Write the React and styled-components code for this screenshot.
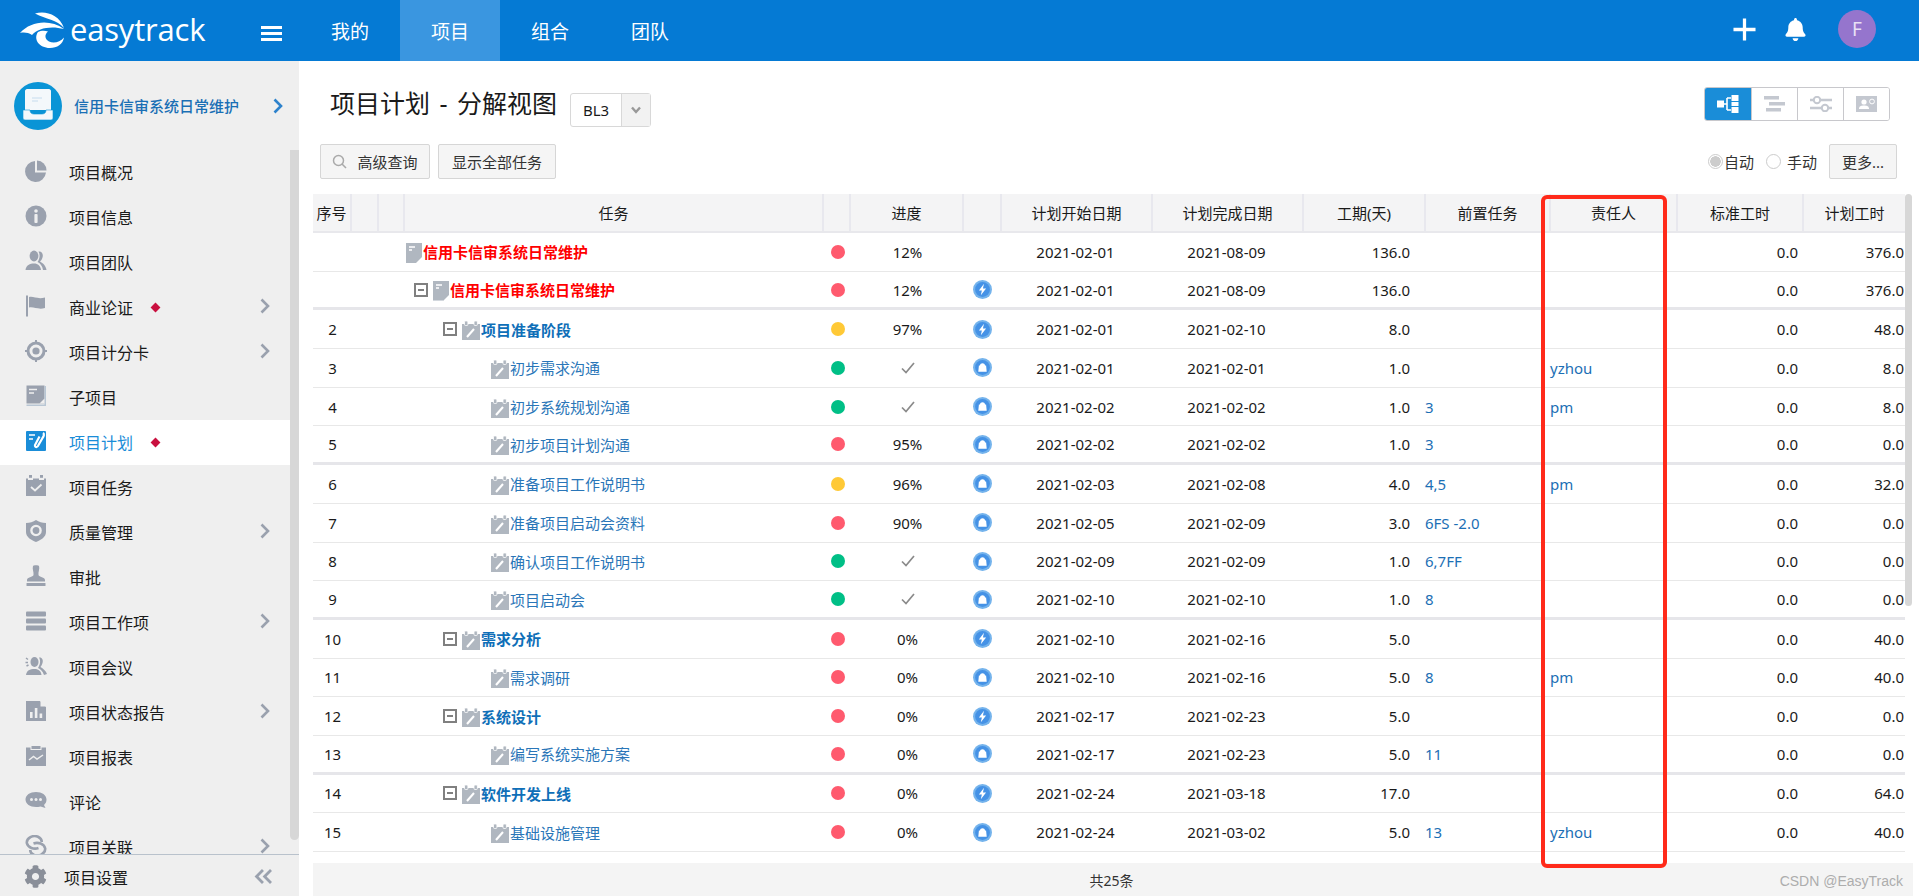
import React from "react"
import styled, { createGlobalStyle } from "styled-components"
import { FaBell, FaCog } from "react-icons/fa"

const GlobalStyle = createGlobalStyle`
    html, body {
        margin: 0;
        padding: 0;
        background: #fff;
        font-family: "Noto Sans", "Noto Sans CJK SC", sans-serif;
        color: #1a1a1a;
    }
    * {
        box-sizing: border-box;
    }
`

const GRAY = "#9aa1ae"
const COLUMNS = "39px 27px 26px 419px 27px 113px 38px 151px 151px 122px 125px 127px 126px 101px"

/* sidebar icons, all in a 22 x 22 box */
const Pie = () => (
    <Glyph viewBox="0 0 22 22">
        <path fill={GRAY} d="M10 1 A10.5 10.5 0 1 0 21 12.5 H10 Z" />
        <path fill={GRAY} d="M12 0.5 A10 10 0 0 1 21.5 10.5 H12 Z" />
    </Glyph>
)
const Info = () => (
    <Glyph viewBox="0 0 22 22">
        <circle cx="11" cy="11" r="10.5" fill={GRAY} />
        <circle cx="11" cy="6" r="1.8" fill="#efefef" />
        <rect x="9.4" y="9" width="3.2" height="9" rx="1" fill="#efefef" />
    </Glyph>
)
const Team = () => (
    <Glyph viewBox="0 0 22 22">
        <ellipse cx="9" cy="6" rx="4.4" ry="5.4" fill={GRAY} />
        <path fill={GRAY} d="M0.5 20 C1 15 5 13.5 9 13.5 C13 13.5 15.5 16 16 20 Z" />
        <path fill={GRAY} d="M13.5 1.5 C17 1 18.5 4 17.5 7.5 C17 9.5 16 10.5 15 11.5 C18 13 21 16 21.5 20 H18 C17.5 16 15 13 12.5 12 C14.5 9 15.5 5 13.5 1.5 Z" />
    </Glyph>
)
const Flag = () => (
    <Glyph viewBox="0 0 22 22">
        <rect x="1" y="0.5" width="2" height="21" fill={GRAY} />
        <path fill={GRAY} d="M4 2 C9 1 12 4.5 20 2.5 V13 C13 15 9 11.5 4 12.5 Z" />
    </Glyph>
)
const Target = () => (
    <Glyph viewBox="0 0 22 22">
        <circle cx="11" cy="11" r="8" fill="none" stroke={GRAY} strokeWidth="3" />
        <circle cx="11" cy="11" r="3.6" fill={GRAY} />
        <path stroke={GRAY} strokeWidth="2" d="M11 0 V3 M11 19 V22 M0 11 H3 M19 11 H22" />
    </Glyph>
)
const Book = () => (
    <Glyph viewBox="0 0 22 22">
        <rect x="1.5" y="0.5" width="18" height="18" fill={GRAY} />
        <path fill="#b8c6d4" d="M1.5 19.5 H19.5 V1 H21 V21 H1.5 Z" />
        <path stroke="#efefef" strokeWidth="1.6" d="M4 4.5 H12 M4 8 H9" />
        <path fill="#efefef" d="M14.5 18.5 L19.5 13.5 V18.5 Z" />
    </Glyph>
)
const PlanBlue = () => (
    <Glyph viewBox="0 0 22 22">
        <rect x="1" y="1" width="20" height="20" rx="1" fill="#1a8dd8" />
        <path stroke="#fff" strokeWidth="1.6" d="M4 5 H10 M4 9 H8" />
        <path stroke="#fff" strokeWidth="2.2" fill="none" d="M18 3 C19.5 4 19 6 17.5 8 L13.5 15 C12.5 18 9.5 17.5 10 15 L14.5 6.5" />
    </Glyph>
)
const TaskCal = () => (
    <Glyph viewBox="0 0 22 22">
        <path fill={GRAY} d="M1 3.5 H21 V21 H1 Z" />
        <path fill="#efefef" d="M3 0 H8 V5.5 H3 Z M14 0 H19 V5.5 H14 Z" transform="translate(0 -0.4)" />
        <rect x="4" y="0" width="3" height="2.8" fill={GRAY} />
        <rect x="15" y="0" width="3" height="2.8" fill={GRAY} />
        <path stroke="#efefef" strokeWidth="1.8" fill="none" d="M6 12 L10 15.5 L16.5 9.5" />
    </Glyph>
)
const Shield = () => (
    <Glyph viewBox="0 0 22 22">
        <path fill={GRAY} d="M1 3 C5 3 8 2 11 0 C14 2 17 3 21 3 V12 C21 17 16 20 11 22 C6 20 1 17 1 12 Z" />
        <circle cx="11" cy="10.5" r="4.6" fill="none" stroke="#efefef" strokeWidth="2.4" />
    </Glyph>
)
const Stamp = () => (
    <Glyph viewBox="0 0 22 22">
        <path fill={GRAY} d="M8 1 C8 0 14 0 14 1 C15 4 13 7 13.5 10 C14 12 20 12 20 15 V16.5 H2 V15 C2 12 8 12 8.5 10 C9 7 7 4 8 1 Z" />
        <rect x="1.5" y="18" width="19" height="3" rx="0.5" fill={GRAY} />
    </Glyph>
)
const Stack = () => (
    <Glyph viewBox="0 0 22 22">
        <rect x="1" y="1.5" width="20" height="5" rx="1" fill={GRAY} />
        <rect x="1" y="8.5" width="20" height="5" rx="1" fill={GRAY} />
        <rect x="1" y="15.5" width="20" height="5" rx="1" fill={GRAY} />
    </Glyph>
)
const Meeting = () => (
    <Glyph viewBox="0 0 22 22">
        <ellipse cx="9.5" cy="7" rx="4" ry="5" fill={GRAY} />
        <path fill={GRAY} d="M1 20 C1.5 15.5 5 14 9.5 14 C14 14 16 16.5 16.5 20 Z" />
        <path fill={GRAY} d="M14 2.5 C17 2 18.5 5 17.5 8 C17 10 16 11 15.5 12 C18 13.5 21 16 22 19 L19 20 C17.5 16 15.5 14 13 13 C15 10 16 6 14 2.5 Z" />
        <path stroke={GRAY} strokeWidth="1.4" d="M1 3 L3 4.5 M0.5 7.5 H3 M1.5 11 L3.5 10" />
    </Glyph>
)
const Report = () => (
    <Glyph viewBox="0 0 22 22">
        <path fill={GRAY} d="M1 1 H15 L21 7 V21 H1 Z" />
        <path fill="#efefef" d="M15.5 0.5 H16.5 L21.5 5.5 V6.5 H15.5 Z" />
        <path fill="#efefef" d="M5 12 H7.6 V18 H5 Z M9.8 8 H12.4 V18 H9.8 Z M14.6 13.5 H17.2 V18 H14.6 Z" />
    </Glyph>
)
const Chart = () => (
    <Glyph viewBox="0 0 22 22">
        <rect x="1" y="2.5" width="20" height="18.5" fill={GRAY} />
        <rect x="6" y="0.5" width="10" height="4" fill={GRAY} stroke="#efefef" strokeWidth="1" />
        <path stroke="#efefef" strokeWidth="1.5" fill="none" d="M4 15 L8.5 11.5 L12 14 L18 10" />
    </Glyph>
)
const Comment = () => (
    <Glyph viewBox="0 0 22 22">
        <path fill={GRAY} d="M11 2 C17 2 21.5 5 21.5 9.5 C21.5 12 20.5 13.5 19 15 L20.5 18 L15.5 16.5 C14 17 12.5 17 11 17 C5 17 0.5 14 0.5 9.5 C0.5 5 5 2 11 2 Z" />
        <circle cx="6.5" cy="9.5" r="1.5" fill="#efefef" />
        <circle cx="11" cy="9.5" r="1.5" fill="#efefef" />
        <circle cx="15.5" cy="9.5" r="1.5" fill="#efefef" />
    </Glyph>
)
const LinkRings = () => (
    <Glyph viewBox="0 0 22 22">
        <path fill="none" stroke={GRAY} strokeWidth="2.6" d="M13.5 13 C9 14.5 3 13 1.8 8 C1.5 3 8 -0.5 13 1.8 C15.5 3 16.8 5 16.8 7" />
        <path fill="none" stroke={GRAY} strokeWidth="2.6" d="M8.5 8.5 C13 7 19 8.5 20.2 13.5 C20.5 18.5 14 22 9 20 C6.5 19 5.2 17 5.2 15" />
    </Glyph>
)

const Chevron = ({ color = GRAY }) => (
    <ChevronSvg viewBox="0 0 10 16">
        <path fill="none" stroke={color} strokeWidth="2.6" d="M1.5 1.5 L8 8 L1.5 14.5" />
    </ChevronSvg>
)

const Logo = () => (
    <LogoSvg viewBox="16 10 48 40">
        <path fill="#fff" d="M33 12.5 C43 9.5 57 13 62 27 C55 18.5 44 18.5 33 12.5 Z" />
        <path fill="#fff" d="M18 32 C29 20 48 18 62 28 C49 24.5 36 27 30 34 C26 31.5 22 31 18 32 Z" />
        <path fill="#fff" d="M36 31 C31 38 37 47 48 47 C55 47 61 43 62 36.5 C58 41 52 43 47 40.5 C43 38 42 34 46 30.5 C43 29.5 39 29.5 36 31 Z" />
    </LogoSvg>
)

const ProjectBadge = () => (
    <BadgeSvg viewBox="0 0 48 48">
        <circle cx="24" cy="24" r="24" fill="#0a94d6" />
        <path fill="#f4f8fb" d="M11 9 C11 8 12 7 13 7 H35 C36 7 37 8 37 9 V28 H11 Z" />
        <path stroke="#c6dcee" strokeWidth="1" d="M18 16 H28 M18 19 H24" />
        <path fill="#f4f8fb" stroke="#0a94d6" strokeWidth="0.6" d="M9 28 H16 C16 31 18 32 20 32 H28 C30 32 32 31 32 28 H39 V36 C39 37 38 38 37 38 H11 C10 38 9 37 9 36 Z" />
    </BadgeSvg>
)

const DocIcon = ({ $small }) => (
    <TaskIconSvg viewBox="0 0 16 20" $w={16} $h={20}>
        <path fill="#b0b7c0" d="M0 0 H16 V14 L10 20 H0 Z" />
        {$small && <path fill="#d3d8de" d="M0 19 H10 V20 H0 Z" />}
        <path stroke="#fff" strokeWidth="1.3" d="M3 4 H9 M3 7 H6" />
        <path fill="#fff" d="M11 20 L16 15 V20 Z" />
    </TaskIconSvg>
)

const PlanIcon = () => (
    <TaskIconSvg viewBox="0 0 18 19" $w={18} $h={19}>
        <path fill="#b0b7c0" d="M0 3 H18 V19 H0 Z" />
        <rect x="2.5" y="0" width="3.4" height="4.5" rx="1" fill="#b0b7c0" stroke="#fff" strokeWidth="0.8" />
        <rect x="12" y="0" width="3.4" height="4.5" rx="1" fill="#b0b7c0" stroke="#fff" strokeWidth="0.8" />
        <path stroke="#fff" strokeWidth="2" d="M5 16 L12 8" />
    </TaskIconSvg>
)

const TypeIcon = ({ kind }) => (
    <TypeSvg viewBox="0 0 18 18">
        <circle cx="9" cy="9" r="9" fill="#74b3ec" />
        <circle cx="9" cy="9" r="7" fill="#4592e6" />
        {kind === "bolt"
            ? <path fill="#fff" d="M10.4 3.6 L5.6 10 H8.4 L7.4 14.4 L12.4 8 H9.4 Z" />
            : <path fill="#fff" d="M5.6 7 H6.6 C6.8 4.2 11.2 4.2 11.4 7 H12.4 L13 13 H5 Z" />}
    </TypeSvg>
)

const NAV_ITEMS = [
    { label: "项目概况", Icon: Pie },
    { label: "项目信息", Icon: Info },
    { label: "项目团队", Icon: Team },
    { label: "商业论证", Icon: Flag, mark: true, more: true },
    { label: "项目计分卡", Icon: Target, more: true },
    { label: "子项目", Icon: Book },
    { label: "项目计划", Icon: PlanBlue, mark: true, active: true },
    { label: "项目任务", Icon: TaskCal },
    { label: "质量管理", Icon: Shield, more: true },
    { label: "审批", Icon: Stamp },
    { label: "项目工作项", Icon: Stack, more: true },
    { label: "项目会议", Icon: Meeting },
    { label: "项目状态报告", Icon: Report, more: true },
    { label: "项目报表", Icon: Chart },
    { label: "评论", Icon: Comment },
    { label: "项目关联", Icon: LinkRings, more: true },
]

const HEAD = ["序号", "", "", "任务", "", "进度", "", "计划开始日期", "计划完成日期", "工期(天)", "前置任务", "责任人", "标准工时", "计划工时"]

const STATUS = { red: "#ff5a6e", yellow: "#ffc936", green: "#00bf86" }

const ROWS = [
    { no: "", name: "信用卡信审系统日常维护", level: 0, status: "red", pct: "12%", start: "2021-02-01", end: "2021-08-09", days: "136.0", work: "376.0" },
    { no: "", name: "信用卡信审系统日常维护", level: 1, status: "red", pct: "12%", type: "bolt", start: "2021-02-01", end: "2021-08-09", days: "136.0", work: "376.0" },
    { no: "2", name: "项目准备阶段", level: 2, status: "yellow", pct: "97%", type: "bolt", start: "2021-02-01", end: "2021-02-10", days: "8.0", work: "48.0" },
    { no: "3", name: "初步需求沟通", level: 3, status: "green", type: "lock", start: "2021-02-01", end: "2021-02-01", days: "1.0", owner: "yzhou", work: "8.0" },
    { no: "4", name: "初步系统规划沟通", level: 3, status: "green", type: "lock", start: "2021-02-02", end: "2021-02-02", days: "1.0", pre: "3", owner: "pm", work: "8.0" },
    { no: "5", name: "初步项目计划沟通", level: 3, status: "red", pct: "95%", type: "lock", start: "2021-02-02", end: "2021-02-02", days: "1.0", pre: "3", work: "0.0" },
    { no: "6", name: "准备项目工作说明书", level: 3, status: "yellow", pct: "96%", type: "lock", start: "2021-02-03", end: "2021-02-08", days: "4.0", pre: "4,5", owner: "pm", work: "32.0" },
    { no: "7", name: "准备项目启动会资料", level: 3, status: "red", pct: "90%", type: "lock", start: "2021-02-05", end: "2021-02-09", days: "3.0", pre: "6FS -2.0", work: "0.0" },
    { no: "8", name: "确认项目工作说明书", level: 3, status: "green", type: "lock", start: "2021-02-09", end: "2021-02-09", days: "1.0", pre: "6,7FF", work: "0.0" },
    { no: "9", name: "项目启动会", level: 3, status: "green", type: "lock", start: "2021-02-10", end: "2021-02-10", days: "1.0", pre: "8", work: "0.0" },
    { no: "10", name: "需求分析", level: 2, status: "red", pct: "0%", type: "bolt", start: "2021-02-10", end: "2021-02-16", days: "5.0", work: "40.0" },
    { no: "11", name: "需求调研", level: 3, status: "red", pct: "0%", type: "lock", start: "2021-02-10", end: "2021-02-16", days: "5.0", pre: "8", owner: "pm", work: "40.0" },
    { no: "12", name: "系统设计", level: 2, status: "red", pct: "0%", type: "bolt", start: "2021-02-17", end: "2021-02-23", days: "5.0", work: "0.0" },
    { no: "13", name: "编写系统实施方案", level: 3, status: "red", pct: "0%", type: "lock", start: "2021-02-17", end: "2021-02-23", days: "5.0", pre: "11", work: "0.0" },
    { no: "14", name: "软件开发上线", level: 2, status: "red", pct: "0%", type: "bolt", start: "2021-02-24", end: "2021-03-18", days: "17.0", work: "64.0" },
    { no: "15", name: "基础设施管理", level: 3, status: "red", pct: "0%", type: "lock", start: "2021-02-24", end: "2021-03-02", days: "5.0", pre: "13", owner: "yzhou", work: "40.0" },
]

const INDENT = [1, 9, 38, 86]

const App = () => {
    return (
        <Page>
            <GlobalStyle />
            <TopBar>
                <Brand>
                    <Logo />
                    <BrandName>easytrack</BrandName>
                    <Burger><span /><span /><span /></Burger>
                </Brand>
                {["我的", "项目", "组合", "团队"].map((tab) => (
                    <Tab key={tab} $active={tab === "项目"}>{tab}</Tab>
                ))}
                <TopRight>
                    <PlusSign viewBox="0 0 24 24">
                        <path stroke="#fff" strokeWidth="3.4" d="M12 0.5 V23.5 M0.5 12 H23.5" />
                    </PlusSign>
                    <BellWrap><FaBell /></BellWrap>
                    <Avatar>F</Avatar>
                </TopRight>
            </TopBar>

            <Body>
                <Sidebar>
                    <ProjectHead>
                        <ProjectBadge />
                        <ProjectName>信用卡信审系统日常维护</ProjectName>
                        <Chevron color="#2d82cc" />
                    </ProjectHead>
                    <NavArea>
                        <NavList>
                            {NAV_ITEMS.map(({ label, Icon, mark, more, active }) => (
                                <NavItem key={label} $active={active}>
                                    <NavIcon><Icon /></NavIcon>
                                    <NavLabel $active={active}>{label}</NavLabel>
                                    {mark && <Diamond />}
                                    {more && <MoreSlot><Chevron /></MoreSlot>}
                                </NavItem>
                            ))}
                        </NavList>
                        <NavThumb />
                    </NavArea>
                    <SideFooter>
                        <GearWrap><FaCog /></GearWrap>
                        <SideFooterLabel>项目设置</SideFooterLabel>
                        <Collapse viewBox="0 0 17 14">
                            <path fill="none" stroke={GRAY} strokeWidth="2.6" d="M8 1 L2 7 L8 13 M15.5 1 L9.5 7 L15.5 13" />
                        </Collapse>
                    </SideFooter>
                </Sidebar>

                <Main>
                    <TitleRow>
                        <Title>项目计划 - 分解视图</Title>
                        <Select>
                            <SelectValue>BL3</SelectValue>
                            <SelectArrow>
                                <svg width="10" height="8" viewBox="0 0 10 8">
                                    <path fill="none" stroke="#999" strokeWidth="2.4" d="M1 1.5 L5 6 L9 1.5" />
                                </svg>
                            </SelectArrow>
                        </Select>
                        <ViewSwitch>
                            <ViewButton $active>
                                <svg width="22" height="18" viewBox="0 0 22 18">
                                    <rect x="0" y="5.5" width="7" height="7" fill="#fff" />
                                    <path stroke="#fff" strokeWidth="1.6" fill="none" d="M7 9 H10 M10 3 V15 M10 3 H14 M10 15 H14" />
                                    <rect x="14.5" y="0" width="7" height="6" fill="#fff" />
                                    <rect x="14.5" y="7" width="7" height="4" fill="#fff" />
                                    <rect x="14.5" y="12" width="7" height="6" fill="#fff" />
                                </svg>
                            </ViewButton>
                            <ViewButton>
                                <svg width="22" height="16" viewBox="0 0 22 16">
                                    <path fill="#c4c8d0" d="M0 0 H15 V3.6 H0 Z M5 6 H21 V9.6 H5 Z M2 12 H17 V15.6 H2 Z" />
                                </svg>
                            </ViewButton>
                            <ViewButton>
                                <svg width="22" height="16" viewBox="0 0 22 16">
                                    <path stroke="#c4c8d0" strokeWidth="2.4" d="M0 4 H22 M0 12 H22" />
                                    <circle cx="7" cy="4" r="3.2" fill="#fff" stroke="#c4c8d0" strokeWidth="2" />
                                    <circle cx="15" cy="12" r="3.2" fill="#fff" stroke="#c4c8d0" strokeWidth="2" />
                                </svg>
                            </ViewButton>
                            <ViewButton>
                                <svg width="21" height="16" viewBox="0 0 21 16">
                                    <rect width="21" height="16" fill="#c4c8d0" />
                                    <circle cx="8" cy="6" r="2.6" fill="#fff" />
                                    <path fill="#fff" d="M3 13 C3 10 5 9.5 8 9.5 C11 9.5 13 10 13 13 Z" />
                                    <circle cx="16" cy="5.5" r="2.4" fill="none" stroke="#fff" strokeWidth="1" />
                                </svg>
                            </ViewButton>
                        </ViewSwitch>
                    </TitleRow>

                    <Toolbar>
                        <GrayButton $w={110}>
                            <svg width="15" height="15" viewBox="0 0 15 15">
                                <circle cx="6.5" cy="6.5" r="5" fill="none" stroke="#aaa" strokeWidth="1.5" />
                                <path stroke="#aaa" strokeWidth="1.6" d="M10 10 L14 14" />
                            </svg>
                            高级查询
                        </GrayButton>
                        <GrayButton $w={118}>显示全部任务</GrayButton>
                        <ToolbarRight>
                            <RadioItem>
                                <Radio $on />
                                自动
                            </RadioItem>
                            <RadioItem $gap={6}>
                                <Radio />
                                手动
                            </RadioItem>
                            <GrayButton $w={68}>更多...</GrayButton>
                        </ToolbarRight>
                    </Toolbar>

                    <TableArea>
                        <Table>
                            <HeadRow>
                                {HEAD.map((text, index) => (
                                    <HeadCell key={index}>{text}</HeadCell>
                                ))}
                            </HeadRow>
                            {ROWS.map((row, index) => (
                                <Row key={index} $thick={index % 4 === 1}>
                                    <Cell $align="center">{row.no}</Cell>
                                    <Cell />
                                    <Cell />
                                    <TaskCell $indent={INDENT[row.level]}>
                                        {(row.level === 1 || row.level === 2) && <Toggle />}
                                        {row.level < 2 ? <DocIcon $small={row.level === 1} /> : <PlanIcon />}
                                        <TaskName $level={row.level}>{row.name}</TaskName>
                                    </TaskCell>
                                    <Cell $align="center"><Dot $color={STATUS[row.status]} /></Cell>
                                    <Cell $align="center">
                                        {row.pct || (
                                            <svg width="14" height="12" viewBox="0 0 14 12">
                                                <path fill="none" stroke="#8a8a8a" strokeWidth="1.7" d="M1 6.5 L5 10.5 L13 1" />
                                            </svg>
                                        )}
                                    </Cell>
                                    <Cell $align="center" $right={2}>{row.type && <TypeIcon kind={row.type} />}</Cell>
                                    <Cell $align="center" $right={4}>{row.start}</Cell>
                                    <Cell $align="center" $right={4}>{row.end}</Cell>
                                    <Cell $align="flex-end" $right={16}>{row.days}</Cell>
                                    <LinkCell>{row.pre}</LinkCell>
                                    <LinkCell>{row.owner}</LinkCell>
                                    <Cell $align="flex-end" $right={6}>0.0</Cell>
                                    <Cell $align="flex-end" $right={1}>{row.work}</Cell>
                                </Row>
                            ))}
                        </Table>
                        <TableThumb />
                    </TableArea>

                    <Pager>共25条</Pager>
                    <Watermark>CSDN @EasyTrack</Watermark>
                    <RedFrame />
                </Main>
            </Body>
        </Page>
    )
}

const Page = styled.div`
    width: 100%;
    height: 896px;
    display: flex;
    flex-direction: column;
    overflow: hidden;
`

const TopBar = styled.header`
    height: 61px;
    flex: none;
    display: flex;
    align-items: stretch;
    background: #057ad4;
`

const Brand = styled.div`
    width: 300px;
    display: flex;
    align-items: center;
    padding: 0 18px;
`

const LogoSvg = styled.svg`
    width: 48px;
    height: 40px;
`

const BrandName = styled.span`
    margin-left: 4px;
    margin-top: -3px;
    font-family: "Open Sans", sans-serif;
    font-size: 31px;
    font-weight: 500;
    letter-spacing: -0.2px;
    color: #fff;
    line-height: 1;
`

const Burger = styled.div`
    margin-left: auto;
    margin-top: 5px;
    width: 21px;
    display: flex;
    flex-direction: column;
    gap: 3px;

    span {
        display: block;
        height: 3px;
        background: #fff;
    }
`

const Tab = styled.div`
    width: 100px;
    display: flex;
    align-items: center;
    justify-content: center;
    color: #fff;
    font-size: 19px;
    background: ${(props) => (props.$active ? "#3a96e0" : "transparent")};
`

const TopRight = styled.div`
    margin-left: auto;
    padding-right: 43px;
    display: flex;
    align-items: center;
`

const PlusSign = styled.svg`
    width: 23px;
    height: 23px;
    margin-top: -2px;
`

const BellWrap = styled.div`
    margin-left: 28px;
    margin-top: -2px;
    color: #fff;
    font-size: 23px;
    display: flex;
`

const Avatar = styled.div`
    margin-left: 31px;
    width: 38px;
    height: 38px;
    border-radius: 50%;
    background: #9575cd;
    color: #e8e0f5;
    font-size: 19px;
    display: flex;
    align-items: center;
    justify-content: center;
    margin-top: -3px;
`

const Body = styled.div`
    flex: 1;
    display: flex;
    min-height: 0;
`

const Sidebar = styled.aside`
    width: 299px;
    flex: none;
    display: flex;
    flex-direction: column;
    background: #efefef;
`

const ProjectHead = styled.div`
    height: 89px;
    flex: none;
    display: flex;
    align-items: center;
    padding: 0 16px 0 14px;
`

const BadgeSvg = styled.svg`
    width: 48px;
    height: 48px;
    flex: none;
`

const ProjectName = styled.div`
    flex: 1;
    margin-left: 12px;
    font-size: 15px;
    font-weight: 500;
    color: #1a6fb5;
`

const ChevronSvg = styled.svg`
    width: 10px;
    height: 16px;
    display: block;
`

const NavArea = styled.div`
    flex: 1;
    min-height: 0;
    display: flex;
    align-items: flex-start;
`

const NavList = styled.nav`
    width: 290px;
    height: 100%;
    overflow: hidden;
`

const NavItem = styled.div`
    height: 45px;
    display: flex;
    align-items: center;
    padding-left: 25px;
    background: ${(props) => (props.$active ? "#fff" : "transparent")};
`

const NavIcon = styled.span`
    width: 22px;
    height: 22px;
    flex: none;
    margin-top: -3px;
`

const Glyph = styled.svg`
    width: 22px;
    height: 22px;
    display: block;
`

const NavLabel = styled.span`
    margin-left: 22px;
    margin-top: -2px;
    font-size: 16px;
    color: ${(props) => (props.$active ? "#1a8dd8" : "#1a1a1a")};
`

const Diamond = styled.i`
    width: 7px;
    height: 7px;
    margin-left: 19px;
    background: #c9103f;
    transform: rotate(45deg);
`

const MoreSlot = styled.span`
    margin-left: auto;
    margin-right: 20px;
    margin-top: -3px;
`

const NavThumb = styled.div`
    width: 9px;
    height: 690px;
    background: #d7d7d7;
    border-radius: 0 0 5px 5px;
`

const SideFooter = styled.div`
    height: 42px;
    flex: none;
    display: flex;
    align-items: center;
    padding: 2px 26px 0 24px;
    border-top: 1px solid #b9c2cc;
`

const GearWrap = styled.span`
    display: flex;
    color: #8a8f99;
    font-size: 23px;
`

const SideFooterLabel = styled.span`
    margin-left: 17px;
    font-size: 16px;
    flex: 1;
`

const Collapse = styled.svg`
    width: 19px;
    height: 15px;
`

const Main = styled.main`
    flex: 1;
    min-width: 0;
    position: relative;
    padding: 26px 0 0 14px;
    background: #fff;
`

const TitleRow = styled.div`
    height: 40px;
    display: flex;
    align-items: flex-start;
    padding: 0 29px 0 17px;
`

const Title = styled.h1`
    margin: -2px 0 0;
    font-size: 25px;
    font-weight: 400;
    line-height: 36px;
    word-spacing: 3px;
    color: #1a1a1a;
`

const Select = styled.div`
    margin: 6px 0 0 13px;
    width: 81px;
    height: 34px;
    display: flex;
    border: 1px solid #d8d8d8;
    border-radius: 3px;
`

const SelectValue = styled.span`
    width: 51px;
    display: flex;
    align-items: center;
    justify-content: center;
    font-size: 15px;
    border-right: 1px solid #d8d8d8;
`

const SelectArrow = styled.span`
    flex: 1;
    display: flex;
    align-items: center;
    justify-content: center;
    background: #f2f2f2;
`

const ViewSwitch = styled.div`
    margin-left: auto;
    display: flex;
    height: 34px;
    border-radius: 3px;
    overflow: hidden;
    border: 1px solid #c8c8cc;
`

const ViewButton = styled.div`
    width: 46px;
    display: flex;
    align-items: center;
    justify-content: center;
    background: ${(props) => (props.$active ? "#1a8dd8" : "#fff")};
    border-left: 1px solid #c8c8cc;

    &:first-child {
        border-left: 0;
    }
`

const Toolbar = styled.div`
    margin-top: 17px;
    height: 35px;
    display: flex;
    align-items: center;
    gap: 8px;
    padding: 0 22px 0 7px;
`

const GrayButton = styled.div`
    width: ${(props) => props.$w}px;
    height: 35px;
    display: flex;
    align-items: center;
    justify-content: center;
    gap: 10px;
    font-size: 15px;
    color: #333;
    background: #f5f5f5;
    border: 1px solid #d6d6d6;
    border-radius: 2px;
`

const ToolbarRight = styled.div`
    margin-left: auto;
    display: flex;
    align-items: center;
`

const RadioItem = styled.label`
    display: flex;
    align-items: center;
    gap: ${(props) => props.$gap || 1}px;
    font-size: 15px;
    color: #333;
    margin-right: 12px;
`

const Radio = styled.span`
    width: 15px;
    height: 15px;
    border-radius: 50%;
    border: 1px solid #ccc;
    background: ${(props) => (props.$on ? "radial-gradient(circle, #ccc 0 5px, #fff 5.5px)" : "#fff")};
`

const TableArea = styled.div`
    margin-top: 15px;
    height: 669px;
    display: flex;
    align-items: flex-start;
`

const Table = styled.div`
    width: 1592px;
    flex: none;
`

const HeadRow = styled.div`
    height: 39px;
    display: grid;
    grid-template-columns: ${COLUMNS};
    background: #f4f4f5;
    border-bottom: 2px solid #e8e8ec;
`

const HeadCell = styled.div`
    display: flex;
    align-items: center;
    justify-content: center;
    font-size: 15px;
    color: #1a1a1a;
    border-right: 2px solid #e8e8ee;

    &:last-child {
        border-right: 0;
    }
`

const Row = styled.div`
    height: 38.7px;
    display: grid;
    grid-template-columns: ${COLUMNS};
    border-bottom: ${(props) => (props.$thick ? "3px solid #e6e6ea" : "1px solid #e8e8e8")};
`

const Cell = styled.div`
    display: flex;
    align-items: center;
    justify-content: ${(props) => props.$align || "flex-start"};
    padding-right: ${(props) => props.$right || 0}px;
    font-size: 15px;
    color: #1a1a1a;
    white-space: nowrap;
`

const LinkCell = styled(Cell)`
    margin-left: -1px;
    color: #1c6fb5;
`

const TaskCell = styled(Cell)`
    padding-left: ${(props) => props.$indent}px;
`

const Toggle = styled.span`
    position: relative;
    width: 14px;
    height: 14px;
    flex: none;
    margin-right: 5px;
    border: 2px solid #808080;

    &:after {
        content: "";
        position: absolute;
        left: 2px;
        right: 2px;
        top: 4px;
        height: 2px;
        background: #808080;
    }
`

const TaskIconSvg = styled.svg`
    width: ${(props) => props.$w}px;
    height: ${(props) => props.$h}px;
    flex: none;
    margin-top: 3px;
`

const TaskName = styled.span`
    margin-left: 1px;
    font-weight: ${(props) => (props.$level < 3 ? 700 : 400)};
    color: ${(props) => (props.$level < 2 ? "#ff0000" : props.$level === 2 ? "#0f6fb8" : "#2a76b8")};
`

const Dot = styled.span`
    width: 14px;
    height: 14px;
    border-radius: 50%;
    background: ${(props) => props.$color};
`

const TypeSvg = styled.svg`
    width: 19px;
    height: 19px;
`

const TableThumb = styled.div`
    width: 7px;
    height: 412px;
    background: #d7d7d7;
    border-radius: 4px;
`

const Pager = styled.div`
    height: 33px;
    width: 1600px;
    display: flex;
    align-items: center;
    justify-content: center;
    padding-right: 3px;
    font-size: 14px;
    color: #333;
    background: #f4f4f4;
`

const Watermark = styled.span`
    position: absolute;
    right: 16px;
    bottom: 7px;
    font-family: "Liberation Sans", sans-serif;
    font-size: 14px;
    color: #adadad;
`

const RedFrame = styled.div`
    position: absolute;
    left: 1242px;
    top: 134px;
    width: 126px;
    height: 673px;
    border: 4px solid #ff2a1a;
    border-radius: 6px;
    pointer-events: none;
`

export default App
